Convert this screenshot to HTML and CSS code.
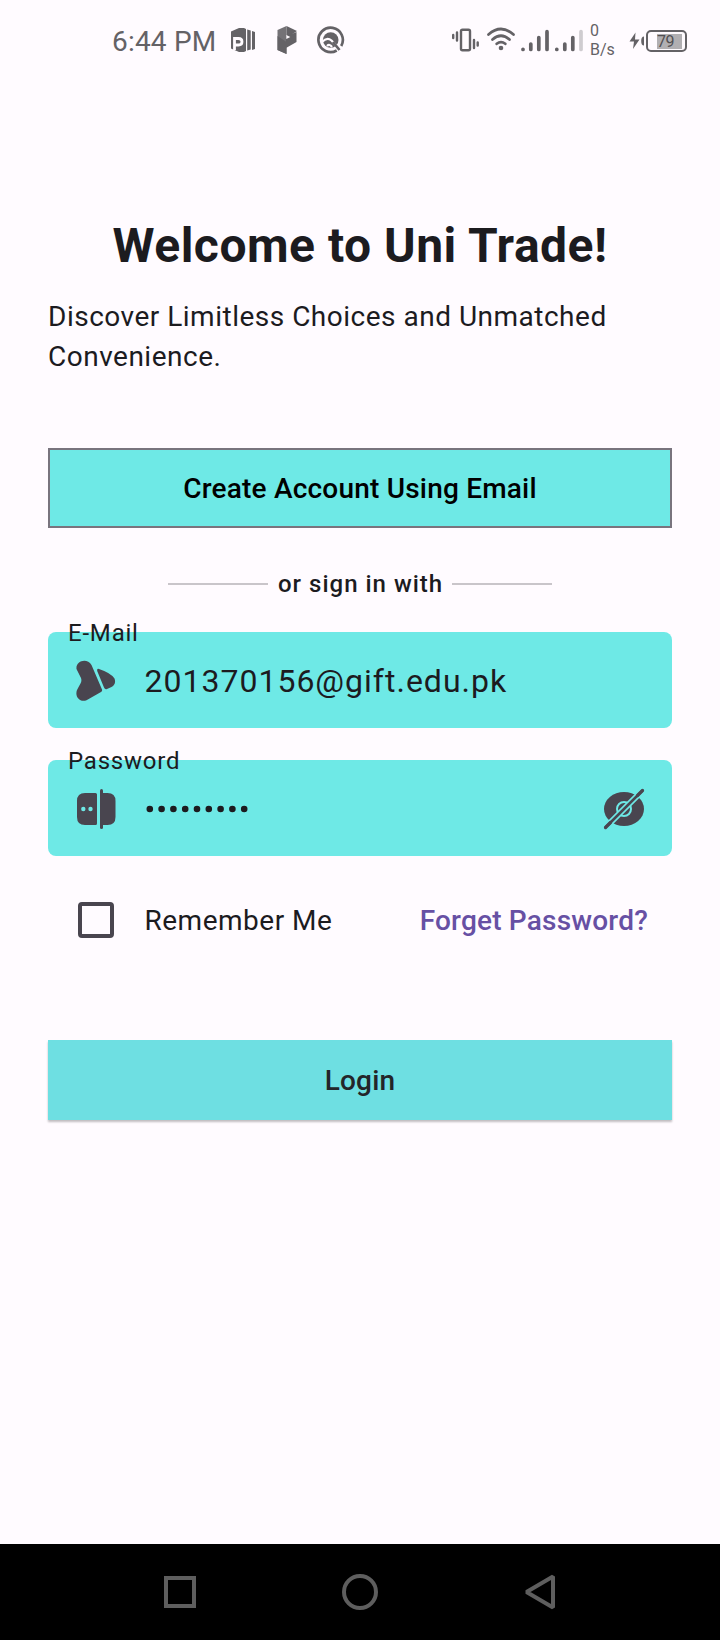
FILE: index.html
```html
<!DOCTYPE html>
<html lang="en">
<head>
<meta charset="utf-8">
<title>Uni Trade</title>
<link rel="stylesheet" href="styles.css">
</head>
<body>
<header class="status">
  <div class="status-left">
    <span class="time">6:44 PM</span>
    <svg class="notifications" width="116" height="30" viewBox="230 25 116 30">
      <g fill="#646266">
        <path d="M231 31.500l8-3.500h5l2 1v22l-2 1h-5l-8-3.500z"/>
        <path d="M247.200 29.500l3.500 1v19l-3.500 1zM252 31l3 1v17l-3 1z"/>
        <path fill="none" stroke="#fffbff" stroke-width="2.800" d="M234.500 50V38.500h4q3.500 0 3.500 3.200t-3.500 3.300h-4"/>
        <path fill="#747276" d="M277.500 30l9-4v28l-9-4z"/>
        <path d="M286.500 26l10.500 5-10.500 7z"/><path d="M286 36l10.500-4v10L286 48zM277.500 36l9 6v12l-9-4z"/>
        <path fill="#fffbff" d="M286.300 35l4 2-4 2z"/>
        <circle cx="330.700" cy="40" r="7.800"/>
      </g>
      <path d="M322 42q5-5.500 9.500-1.500l9 9.500M327 46q2.500-2.500 5 1" fill="none" stroke="#fffbff" stroke-width="2.200"/>
      <path d="M336.700 50.500a12.200 12.200 0 1 1 4.500-4.500M333 42l6.500 8" fill="none" stroke="#646266" stroke-width="2.700"/>
    </svg>
  </div>
  <div class="status-right">
    <svg width="132" height="26" viewBox="451 27 132 26">
      <g fill="none" stroke="#646266" stroke-width="2.400" stroke-linecap="round">
        <rect x="461" y="29.700" width="9" height="20.500" rx="1.500"/>
        <path d="M457 32.500v8M453.200 35v3M474 40v8M477.700 42.500v3"/>
        <path stroke-width="2.700" d="M488.500 34.500q12.500-11 25 0M492.500 39.500q8.500-7.500 17 0M496.700 43.800q4.300-3.500 8.600 0"/>
      </g>
      <circle cx="501" cy="48" r="2.300" fill="#646266"/>
      <g stroke="#646266" stroke-width="3.700" stroke-linecap="round">
        <path d="M523 49.300v.1M530.800 44v5.400M538.800 37.500v11.900M547 31.700v17.700M556.800 49.300v.1M564.800 44v5.400M572.800 37.500v11.900"/>
        <path stroke="#cfccd0" d="M581 31.700v17.700"/>
      </g>
    </svg>
    <span class="speed"><span>0</span><span>B/s</span></span>
    <span class="battery">
      <svg width="16" height="18" viewBox="630 32 16 18"><path fill="#646266" d="M636.500 32.500l-6 9h4.500l-1 7.500 6.500-9.500H636zM645 36.500v9q-2.800 0-2.800-4.500t2.800-4.500"/></svg>
      <span class="cell"><span class="charge">79</span></span>
    </span>
  </div>
</header>

<main class="page">
  <h1 class="title">Welcome to Uni Trade!</h1>
  <p class="subtitle">Discover Limitless Choices and Unmatched Convenience.</p>
  <button class="button create">Create Account Using Email</button>
  <div class="divider"><span class="or">or sign in with</span></div>
  <div class="field">
    <label class="label">E-Mail</label>
    <svg class="lead" width="40" height="42" viewBox="76 660 40 42" fill="#49454f">
      <path d="M76.500 669C75.500 661 87 657.500 91.500 665L102 689.500Q102.500 691 101 692L86.500 700.300C79 703 74 695 77.500 689L80.500 683.500Q82 681 81 678Z"/>
      <path d="M99 669Q111 673 114.500 678.500Q116.500 684 111.500 687L107 689Q105 690 104 687.500L97.200 671Q96.800 668.300 99 669Z"/>
    </svg>
    <span class="value">201370156@gift.edu.pk</span>
  </div>
  <div class="field">
    <label class="label">Password</label>
    <svg class="lead" width="40" height="42" viewBox="76 788 40 42">
      <g fill="#49454f"><path d="M85 793h10.500q1.500 0 1.500 1.500v29q0 1.500-1.500 1.500H85q-8 0-8-8v-16q0-8 8-8zM103 793h4.500q8 0 8 8v16q0 8-8 8H103z"/><rect x="100" y="789" width="3" height="40" rx="1.500"/></g>
      <circle cx="83.300" cy="809" r="2.200" fill="#6ee9e6"/><circle cx="90.500" cy="809" r="2.200" fill="#6ee9e6"/>
    </svg>
    <svg class="value dots" width="104" height="8" viewBox="146 804.500 104 8"><path d="M149.800 808.500h96" fill="none" stroke="#1c1b1f" stroke-width="6.600" stroke-linecap="round" stroke-dasharray="0 11.800"/></svg>
    <svg class="reveal" width="42" height="42" viewBox="603 788 42 42">
      <ellipse cx="624" cy="809" rx="20" ry="17" fill="#49454f"/>
      <circle cx="624" cy="809" r="7" fill="none" stroke="#6ee9e6" stroke-width="2"/>
      <path d="M604.500 828.500l39-39" stroke="#6ee9e6" stroke-width="6"/>
      <path d="M605.500 827.500l37-37" stroke="#49454f" stroke-width="2.500" stroke-linecap="round"/>
      <path d="M605.500 827.500l5-5M637.500 795.500l5-5" stroke="#49454f" stroke-width="3.200" stroke-linecap="round"/>
    </svg>
  </div>
  <div class="options">
    <span class="checkbox"></span>
    <span class="remember">Remember Me</span>
    <a class="forget">Forget Password?</a>
  </div>
  <button class="button login">Login</button>
</main>

<nav class="navbar">
  <svg width="36" height="36" viewBox="0 0 36 36"><rect x="4" y="4" width="28" height="28"/></svg>
  <svg width="36" height="36" viewBox="0 0 36 36"><circle cx="18" cy="18" r="16"/></svg>
  <svg width="36" height="36" viewBox="0 0 36 36"><path stroke-linejoin="bevel" d="M31 2.500v31L4.500 18z"/></svg>
</nav>
</body>
</html>
```
FILE: styles.css
```css
* { box-sizing: border-box; }
body {
  margin: 0;
  width: 720px;
  height: 1640px;
  display: flex;
  flex-direction: column;
  background: #fffbff;
  color: #1c1b1f;
  font-family: Roboto, sans-serif;
  overflow: hidden;
}
.status {
  height: 80px;
  display: flex;
  justify-content: space-between;
  padding: 0 33px 0 112px;
  color: #646266;
}
.status-left, .status-right { display: flex; align-items: center; height: 80px; }
.time { font-size: 28px; line-height: 36px; width: 118px; padding-top: 3px; letter-spacing: .2px; white-space: nowrap; }
.speed {
  display: flex;
  flex-direction: column;
  width: 39px;
  margin-left: 7px;
  font-size: 16px;
  line-height: 19px;
}
.battery { display: flex; align-items: center; gap: 1px; padding-top: 1px; }
.cell {
  width: 41px;
  height: 22px;
  padding: 2px 3px 3px 9px;
  border: 2px solid #646266;
  border-radius: 5px;
}
.charge {
  display: block;
  height: 15px;
  background: #b1afb2;
  color: #514f53;
  font-size: 16px;
  line-height: 16px;
  letter-spacing: -.5px;
}
.page { flex: 1; display: flex; flex-direction: column; padding: 134px 48px 0; }
.title {
  margin: 0;
  font-size: 48px;
  line-height: 64px;
  font-weight: 700;
  letter-spacing: .5px;
  text-align: center;
}
.subtitle { margin: 19px 0 0; font-size: 28px; line-height: 40px; letter-spacing: .5px; }
.button {
  width: 100%;
  height: 80px;
  border: 0;
  padding: 2px 0 0;
  font: 500 28px/40px Roboto, sans-serif;
  letter-spacing: .2px;
}
.create { margin-top: 71px; background: #6ee9e6; color: #000; border: 2px solid #79747e; }
.divider {
  display: grid;
  grid-template-columns: 100px 164px 100px;
  gap: 10px;
  justify-content: center;
  align-items: center;
  height: 32px;
  margin-top: 40px;
}
.divider::before, .divider::after { content: ""; height: 2px; background: #c9c5ca; }
.or { font-size: 24px; line-height: 32px; font-weight: 500; letter-spacing: 1px; white-space: nowrap; }
.field {
  position: relative;
  display: flex;
  align-items: center;
  height: 96px;
  margin-top: 32px;
  padding: 2px 27px 0 28px;
  background: #6ee9e6;
  border-radius: 8px;
}
.label {
  position: absolute;
  left: 20px;
  top: -15px;
  font-size: 24px;
  line-height: 32px;
  letter-spacing: .8px;
}
.value { font-size: 32px; line-height: 48px; letter-spacing: 1px; margin-left: 28.5px; }
.dots { margin-left: 30px; }
.reveal { margin-left: auto; }
.options { display: flex; align-items: center; height: 96px; margin-top: 16px; padding: 0 24px 0 30px; }
.checkbox { width: 36px; height: 36px; border: 4px solid #49454f; border-radius: 4px; }
.remember, .forget { padding-top: 2px; font-size: 28px; line-height: 40px; }
.remember { margin-left: 30.5px; letter-spacing: .5px; }
.forget { margin-left: auto; font-weight: 500; letter-spacing: .2px; color: #6750a4; }
.login { margin-top: 72px; background: #6edfe2; color: #232529; box-shadow: 0 2px 2px rgba(0, 0, 0, .25); }
.navbar {
  height: 96px;
  display: flex;
  justify-content: center;
  align-items: center;
  gap: 144px;
  background: #000;
}
.navbar svg { fill: none; stroke: #5e5e5e; stroke-width: 4; }
```
